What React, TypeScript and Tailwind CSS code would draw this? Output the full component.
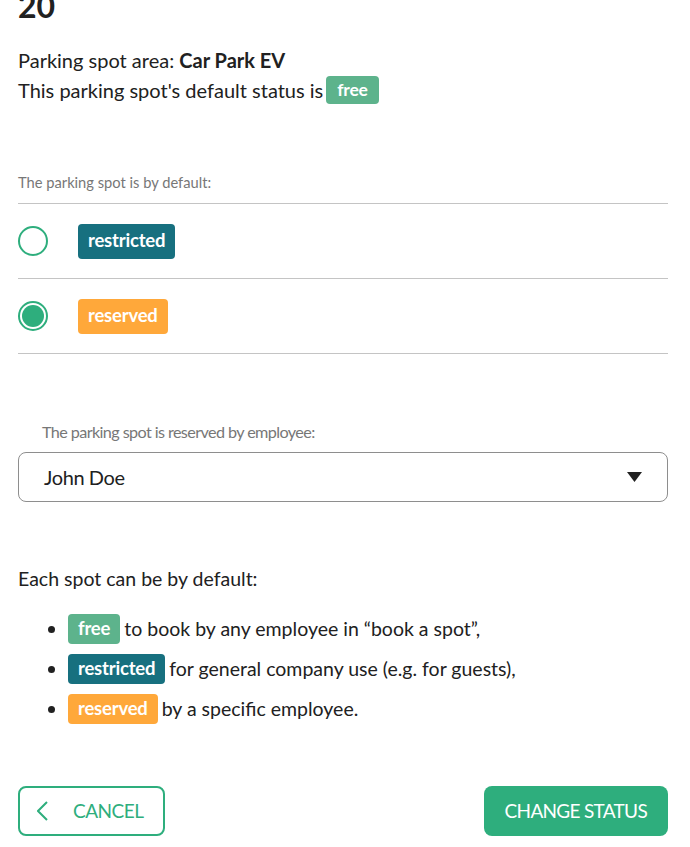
import React, { useState } from "react";

type Status = "free" | "restricted" | "reserved";

const badgeColor: Record<Status, string> = {
  free: "bg-[#5db38c]",
  restricted: "bg-[#17707f]",
  reserved: "bg-[#ffa83a]",
};

function Badge({ status, size = "md" }: { status: Status; size?: "sm" | "md" | "lg" }) {
  const sizes = {
    sm: "h-[28px] px-[11px] text-[17.5px] rounded-[4px]",
    md: "h-[30px] px-[10px] text-[18.5px] rounded-[4px]",
    lg: "h-[35px] px-[10px] text-[18.5px] rounded-[4px]",
  };
  return (
    <span
      className={`inline-flex items-center font-bold text-white tracking-[-0.2px] ${badgeColor[status]} ${sizes[size]}`}
    >
      {status}
    </span>
  );
}

function Radio({ checked, onClick }: { checked: boolean; onClick: () => void }) {
  return (
    <button
      onClick={onClick}
      className="w-[30px] h-[30px] rounded-full border-2 border-[#2eae7d] flex items-center justify-center shrink-0 cursor-pointer"
    >
      {checked && <span className="w-[22px] h-[22px] rounded-full bg-[#2eae7d]" />}
    </button>
  );
}

export default function App() {
  const [selected, setSelected] = useState<Status>("reserved");

  const legend: Array<{ status: Status; text: string }> = [
    { status: "free", text: "to book by any employee in \u201cbook a spot\u201d," },
    { status: "restricted", text: "for general company use (e.g. for guests)," },
    { status: "reserved", text: "by a specific employee." },
  ];

  return (
    <div className="pl-[18px] pr-[22px] pb-[12px] font-['Lato',sans-serif] text-[#212121] bg-white overflow-hidden">
      <h1 className="text-[32px] font-bold leading-none -mt-[10px]">20</h1>

      <div className="mt-[23px] text-[20px] leading-[30px]">
        <p>
          Parking spot area: <span className="font-bold">Car Park EV</span>
        </p>
        <p className="flex items-center gap-[3px]">
          This parking spot's default status is <Badge status="free" size="sm" />
        </p>
      </div>

      <p className="mt-[67px] text-[14.7px] leading-[20px] text-[#777]">The parking spot is by default:</p>

      {/* Default status options */}
      <div className="mt-[11px] border-t border-[#c4c4c4]">
        {(["restricted", "reserved"] as Status[]).map((s) => (
          <div key={s} className="h-[75px] flex items-center gap-[30px] border-b border-[#c4c4c4]">
            <Radio checked={selected === s} onClick={() => setSelected(s)} />
            <Badge status={s} size="lg" />
          </div>
        ))}
      </div>

      <p className="mt-[68px] pl-[24px] text-[16.2px] leading-[20px] tracking-[-0.6px] text-[#777]">
        The parking spot is reserved by employee:
      </p>
      <div className="mt-[10px] h-[50px] rounded-[8px] border border-[#8e8e8e] flex items-center justify-between pl-[25px] pr-[25px]">
        <span className="text-[20px] tracking-[-0.4px]">John Doe</span>
        <svg width="15" height="10" viewBox="0 0 15 10">
          <path d="M0 0 L15 0 L7.5 10 Z" fill="#212121" />
        </svg>
      </div>

      <p className="mt-[65px] text-[19.5px] leading-[24px]">Each spot can be by default:</p>
      <ul className="mt-[18px]">
        {legend.map((l) => (
          <li key={l.status} className="h-[40px] flex items-center text-[19.5px]">
            <span className="w-[7px] h-[7px] rounded-full bg-[#212121] ml-[30px] mr-[13px]" />
            <Badge status={l.status} />
            <span className="ml-[4px]">{l.text}</span>
          </li>
        ))}
      </ul>

      {/* Actions */}
      <div className="mt-[57px] flex items-center justify-between">
        <button className="h-[50px] w-[147px] rounded-[8px] border-2 border-[#2eae7d] flex items-center pl-[17px] text-[#2eae7d] cursor-pointer">
          <svg width="11" height="20" viewBox="0 0 11 20" fill="none">
            <polyline points="10,1 1,10 10,19" stroke="#2eae7d" strokeWidth="2" />
          </svg>
          <span className="ml-[25px] text-[19px] tracking-[-0.5px]">CANCEL</span>
        </button>
        <button className="h-[50px] px-[21px] rounded-[8px] bg-[#2eae7d] text-white text-[19px] tracking-[-0.7px] cursor-pointer">
          CHANGE STATUS
        </button>
      </div>
    </div>
  );
}
